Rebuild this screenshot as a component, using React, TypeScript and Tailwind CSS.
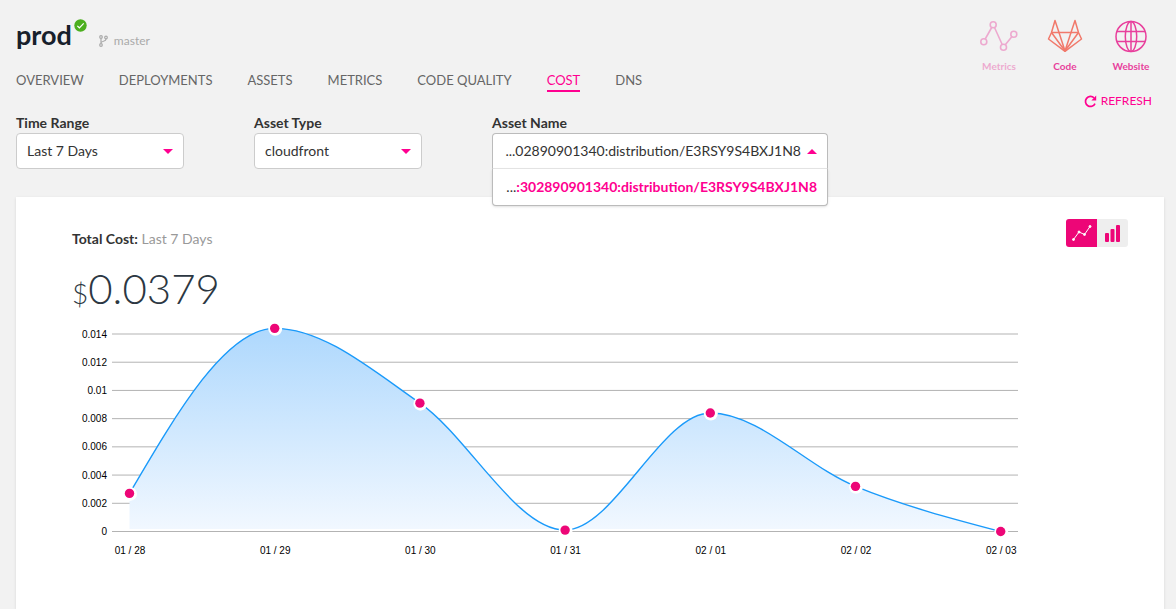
import { useState } from 'react';
import type { ReactNode } from 'react';

const TABS = ['OVERVIEW', 'DEPLOYMENTS', 'ASSETS', 'METRICS', 'CODE QUALITY', 'COST', 'DNS'];

const COSTS = [
  { day: '01 / 28', cost: 0.0027 },
  { day: '01 / 29', cost: 0.0144 },
  { day: '01 / 30', cost: 0.0091 },
  { day: '01 / 31', cost: 0.0001 },
  { day: '02 / 01', cost: 0.0084 },
  { day: '02 / 02', cost: 0.0032 },
  { day: '02 / 03', cost: 0 },
];

const TICKS = [0, 0.002, 0.004, 0.006, 0.008, 0.01, 0.012, 0.014];

type Point = { x: number; y: number };

// Monotone cubic path: flat at every local extreme, no overshoot between points.
function monotonePath(points: Point[]): string {
  const last = points.length - 1;
  const secant = (i: number) => (points[i + 1].y - points[i].y) / (points[i + 1].x - points[i].x);
  const slopes = points.map((_, i) => {
    if (i === 0 || i === last) return 0;
    const a = secant(i - 1);
    const b = secant(i);
    return a * b <= 0 ? 0 : Math.sign(a) * Math.min(Math.abs(a), Math.abs(b), Math.abs(a + b) / 4) * 2;
  });
  slopes[0] = (3 * secant(0) - slopes[1]) / 2;
  slopes[last] = (3 * secant(last - 1) - slopes[last - 1]) / 2;
  let d = `M${points[0].x},${points[0].y}`;
  for (let i = 0; i < last; i++) {
    const p = points[i];
    const q = points[i + 1];
    const h = (q.x - p.x) / 3;
    d += `C${p.x + h},${p.y + h * slopes[i]},${q.x - h},${q.y - h * slopes[i + 1]},${q.x},${q.y}`;
  }
  return d;
}

function CostChart() {
  const base = 211.5;
  const yOf = (v: number) => base - (v / 0.014) * 197.5;
  const points = COSTS.map((c, i) => ({ x: 57.5 + i * 145.2, y: yOf(c.cost) }));
  const line = monotonePath(points);
  return (
    <svg viewBox="0 0 1056 250" className="block h-auto w-full" role="img" aria-label="Cost per day">
      <defs>
        <linearGradient id="cost-fill" x1="0" y1="0" x2="0" y2="1">
          <stop offset="0" stopColor="#aed8fd" />
          <stop offset="1" stopColor="#f2f8ff" />
        </linearGradient>
        <clipPath id="cost-clip">
          <rect x="0" y="0" width="1056" height="209" />
        </clipPath>
      </defs>
      <g className="font-['Liberation_Sans',Arial,sans-serif] text-[10px]" fill="#000">
        {TICKS.map((t) => (
          <g key={t}>
            <line x1="40" x2="946" y1={yOf(t)} y2={yOf(t)} stroke="#b3b3b3" strokeWidth="1" />
            <text x="35" y={yOf(t) + 3.5} textAnchor="end">{t}</text>
          </g>
        ))}
        {COSTS.map((c, i) => (
          <text key={c.day} x={points[i].x + 0.5} y="234" textAnchor="middle">{c.day}</text>
        ))}
      </g>
      <path d={`${line}L${points[6].x},${base}L${points[0].x},${base}Z`} fill="url(#cost-fill)" clipPath="url(#cost-clip)" />
      <path d={line} fill="none" stroke="#1a9afa" strokeWidth="1.4" />
      {points.map((p) => (
        <g key={p.x}>
          <circle cx={p.x + 0.5} cy={p.y + 0.5} r="7" fill="#fff" />
          <circle cx={p.x} cy={p.y} r="4.7" fill="#ed0677" />
        </g>
      ))}
    </svg>
  );
}

function Caret({ up = false }: { up?: boolean }) {
  return (
    <svg width="10" height="5" viewBox="0 0 10 5" className="block shrink-0" aria-hidden="true">
      <path d={up ? 'M0 5L5 0L10 5Z' : 'M0 0L5 5L10 0Z'} fill="#ff0090" />
    </svg>
  );
}

function SelectField({ id, label, options }: { id: string; label: string; options: string[] }) {
  return (
    <div className="w-[168px]">
      <label htmlFor={id} className="block text-sm leading-[21px] font-bold">{label}</label>
      <div className="grid grid-cols-1 items-center">
        <select id={id} className="col-start-1 row-start-1 h-9 w-full appearance-none rounded border border-[#ccc] bg-white px-2.5 text-sm text-[#333]">
          {options.map((o) => <option key={o}>{o}</option>)}
        </select>
        <span className="pointer-events-none col-start-1 row-start-1 mr-[11px] justify-self-end"><Caret /></span>
      </div>
    </div>
  );
}

function AssetNameField() {
  const [open, setOpen] = useState(true);
  return (
    <div className="relative w-[336px]">
      <span id="asset-name-label" className="block text-sm leading-[21px] font-bold">Asset Name</span>
      <button
        type="button"
        aria-haspopup="listbox"
        aria-expanded={open}
        aria-labelledby="asset-name-label"
        onClick={() => setOpen(!open)}
        className="flex h-9 w-full items-center justify-end gap-1.5 rounded-t border border-[#bbb] border-b-[#e6e6e6] bg-white pr-2.5 text-sm whitespace-nowrap text-[#333]"
      >
        <span>...02890901340:distribution/E3RSY9S4BXJ1N8</span>
        <Caret up={open} />
      </button>
      {open && (
        <ul role="listbox" aria-labelledby="asset-name-label" className="absolute top-full z-10 w-full rounded-b border border-t-0 border-[#bbb] bg-white shadow-sm">
          <li role="option" aria-selected="true" className="h-9 pr-2.5 text-right text-sm leading-9 whitespace-nowrap">
            ...<b className="text-[#ff0090]">:302890901340:distribution/E3RSY9S4BXJ1N8</b>
          </li>
        </ul>
      )}
    </div>
  );
}

function ToolLink({ label, faded = false, children }: { label: string; faded?: boolean; children: ReactNode }) {
  return (
    <a href="#" className={`flex w-[66px] flex-col items-center gap-[5px] text-[10px] leading-4 font-bold text-[#e83f9c] ${faded ? 'opacity-40' : ''}`}>
      {children}
      {label}
    </a>
  );
}

export default function App() {
  const [tab, setTab] = useState('COST');
  return (
    <div className="flex min-h-screen flex-col bg-[#f2f2f2] pr-3 pl-4 font-[Lato,sans-serif] text-[#333]">
      <header className="flex justify-between">
        <div>
          <div className="flex h-[62px] items-start pt-[15px]">
            <h1 className="text-[27px] leading-10 font-bold text-[#17202b]">prod</h1>
            <svg width="13" height="13" viewBox="0 0 13 13" className="mt-1 ml-0.5" role="img" aria-label="Healthy">
              <circle cx="6.5" cy="6.5" r="6.2" fill="#4caf1e" />
              <path d="M3.3 6.9L5.4 8.8L9.7 4.4" fill="none" stroke="#fff" strokeWidth="1.2" />
            </svg>
            <div className="mt-4 ml-3 flex items-center gap-1.5 text-xs leading-5 text-[#aaa]">
              <svg width="9" height="12" viewBox="0 0 9 12" fill="none" stroke="#aaa" strokeWidth="1.2" aria-hidden="true">
                <circle cx="2" cy="2" r="1.3" />
                <circle cx="7" cy="2.5" r="1.3" />
                <circle cx="2" cy="10" r="1.3" />
                <path d="M2 3.5V8.5M7 4C7 7 2.5 5.5 2 8" />
              </svg>
              master
            </div>
          </div>
          <nav className="flex gap-[35px] pt-2 text-[13px] leading-5 text-[#666]">
            {TABS.map((t) => (
              <a
                key={t}
                href="#"
                onClick={() => setTab(t)}
                className={t === tab ? 'border-b-2 border-[#ff0090] text-[#ff0090]' : 'border-b-2 border-transparent'}
              >
                {t}
              </a>
            ))}
          </nav>
        </div>
        <div className="flex flex-col items-end">
          <div className="flex pt-[17px]">
            <ToolLink label="Metrics" faded>
              <svg width="38" height="36" viewBox="0 0 38 36" fill="none" stroke="#e83f9c" strokeWidth="1.6">
                <circle cx="3.8" cy="24.7" r="3" />
                <circle cx="13.2" cy="7.8" r="3" />
                <circle cx="23.5" cy="30.2" r="3" />
                <circle cx="33.8" cy="17.2" r="3" />
                <path d="M5.2 22L11.7 10.5M14.5 10.5L22.2 27.5M25.3 27.8L32 19.6" />
              </svg>
            </ToolLink>
            <ToolLink label="Code">
              <svg width="36" height="36" viewBox="0 0 36 36" fill="none" stroke="#f1796b" strokeWidth="1.5" strokeLinejoin="round">
                <path d="M18 34.3L1.5 22L4.5 15.5L8 3.5L12 15.5H24L28 3.5L31.5 15.5L34.5 22Z" />
                <path d="M4.5 15.5H12L18 34L24 15.5H31.5M4.5 15.5L18 34L31.5 15.5" />
              </svg>
            </ToolLink>
            <ToolLink label="Website">
              <svg width="36" height="36" viewBox="0 0 36 36" fill="none" stroke="#e83f9c" strokeWidth="1.5">
                <circle cx="18" cy="19.5" r="15" />
                <ellipse cx="18" cy="19.5" rx="5.7" ry="15" />
                <path d="M18 4.5V34.5M4 14.5H32M4 24.5H32" />
              </svg>
            </ToolLink>
          </div>
          <button type="button" className="mt-[17px] mr-3 flex items-center gap-1 text-xs leading-5 text-[#ff0090]">
            <svg width="13" height="13" viewBox="0 0 13 13" fill="none" stroke="#ff0090" strokeWidth="1.7" aria-hidden="true">
              <path d="M11 8.6A5 5 0 1 1 10 2.9" />
              <path d="M12.2 .6V5.4H7.4Z" fill="#ff0090" stroke="none" />
            </svg>
            REFRESH
          </button>
        </div>
      </header>

      <section className="mt-px flex gap-[70px]">
        <SelectField id="time-range" label="Time Range" options={['Last 7 Days', 'Last 30 Days']} />
        <SelectField id="asset-type" label="Asset Type" options={['cloudfront', 's3']} />
        <AssetNameField />
      </section>

      <main className="mt-7 flex-1 bg-white pr-9 pl-14 shadow-sm">
        <div className="flex items-start justify-between pt-[22px]">
          <p className="pt-2.5 text-sm leading-5 text-[#999]"><b className="text-[#333]">Total Cost:</b> Last 7 Days</p>
          <div className="flex overflow-hidden rounded-[3px]">
            <button type="button" aria-label="Line chart" className="flex h-7 w-[31px] items-center justify-center bg-[#ed0677]">
              <svg width="21" height="18" viewBox="0 0 21 18" fill="#fff" stroke="#fff" strokeWidth="1">
                <path d="M2.5 15.5L8 8L13.5 10.5L19 2.5" fill="none" />
                <circle cx="2.5" cy="15.5" r="1" /><circle cx="8" cy="8" r="1" />
                <circle cx="13.5" cy="10.5" r="1" /><circle cx="19" cy="2.5" r="1" />
              </svg>
            </button>
            <button type="button" aria-label="Bar chart" className="flex h-7 w-[31px] items-center justify-center bg-[#eee]">
              <svg width="16" height="18" viewBox="0 0 16 18" fill="#ed0677">
                <rect x="0" y="9" width="4" height="9" rx="1" />
                <rect x="5.5" y="5" width="4" height="13" rx="1" />
                <rect x="11" y="1" width="4" height="17" rx="1" />
              </svg>
            </button>
          </div>
        </div>
        <p className="pt-3.5 pb-0.5 text-[42px] leading-[50px] font-light text-[#2c3742]"><span className="text-[28px]">$</span>0.0379</p>
        <CostChart />
      </main>
    </div>
  );
}
